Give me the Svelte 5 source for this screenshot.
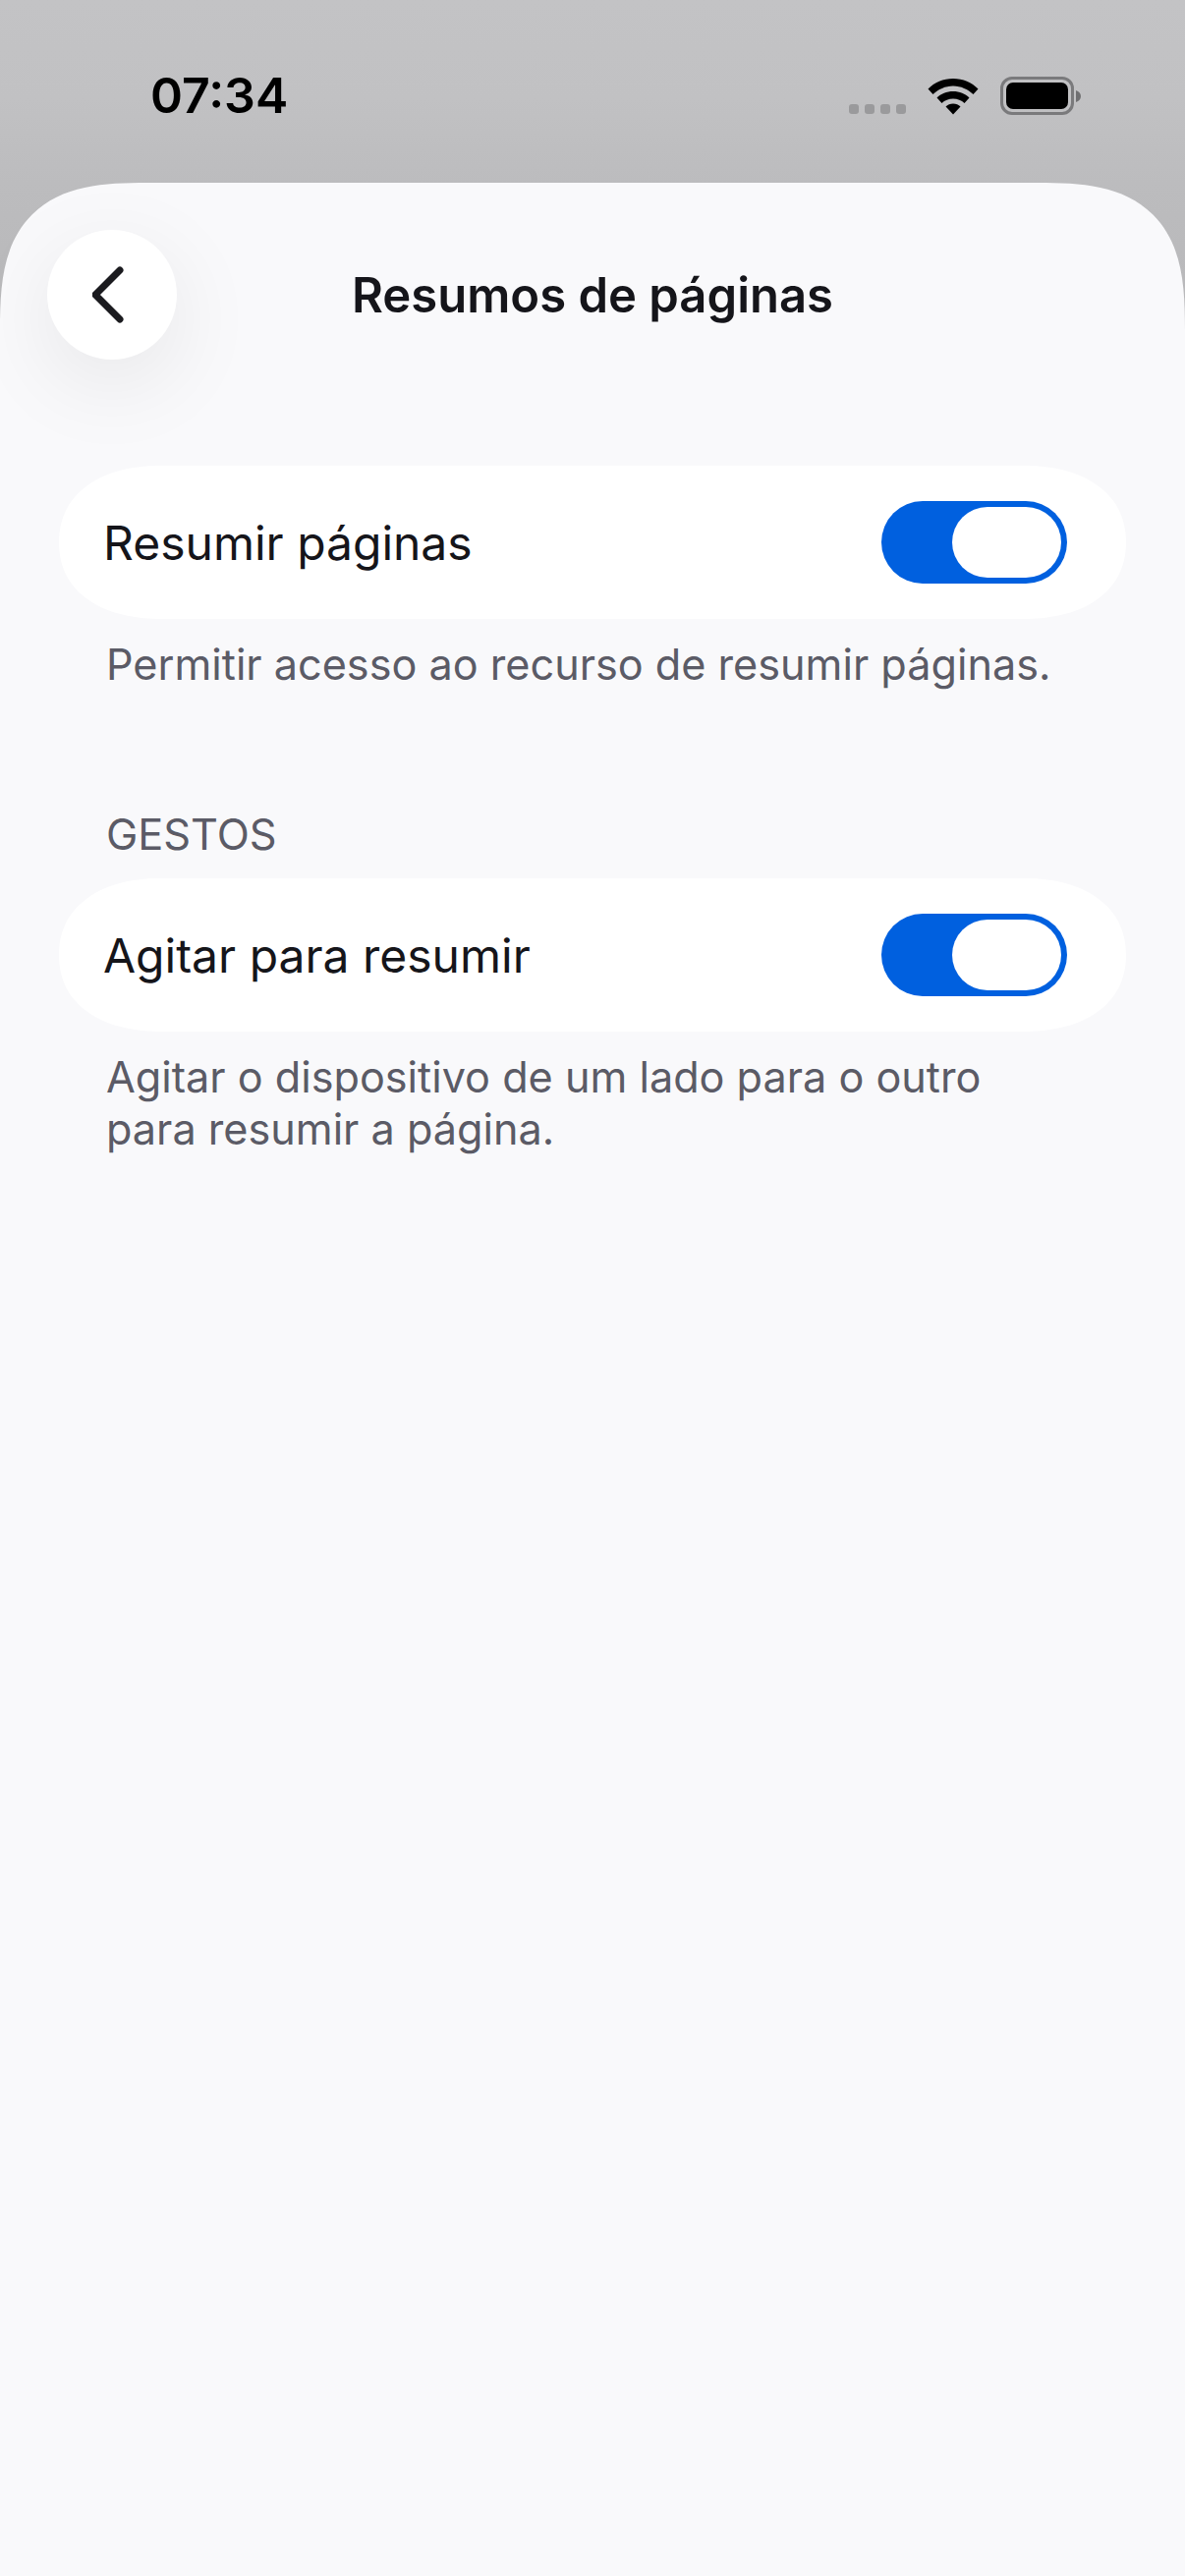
<script>
	const sections = [
		{
			label: 'Resumir páginas',
			note: 'Permitir acesso ao recurso de resumir páginas.'
		},
		{
			heading: 'GESTOS',
			label: 'Agitar para resumir',
			note: 'Agitar o dispositivo de um lado para o outro para resumir a página.'
		}
	]
</script>

<div class="screen">
	<header class="status">
		<span class="time">07:34</span>
		<div class="indicators">
			<div class="signal"><i></i><i></i><i></i><i></i></div>
			<svg class="wifi" width="52" height="38" viewBox="0 0 52 38">
				<path d="M0.500 11.500C7 5 16 1 26 1s19 4 25.500 10.500l-5 5.500C41 12 34 8.500 26 8.500S11 12 5.500 17z" />
				<path d="M9.500 20.500C13.500 16.500 19.500 14 26 14s12.500 2.500 16.500 6.500l-5 5.500C34.500 23 30.500 21.500 26 21.500S17.500 23 14.500 26z" />
				<path d="M18.500 29.500c2-2 4.500-3 7.500-3s5.500 1 7.500 3L26 37.500z" />
			</svg>
			<div class="battery"><div class="charge"></div></div>
			<svg class="nub" width="5" height="12" viewBox="0 0 5 12"><path d="M0 0c3 1 5 3 5 6s-2 5-5 6z" /></svg>
		</div>
	</header>

	<main class="sheet">
		<div class="nav">
			<button class="back" aria-label="Voltar">
				<svg width="40" height="60" viewBox="0 0 40 60">
					<path d="M28 5 3 30l25 25" />
				</svg>
			</button>
			<h1>Resumos de páginas</h1>
		</div>

		{#each sections as section}
			<section>
				{#if section.heading}
					<h2>{section.heading}</h2>
				{/if}
				<div class="card">
					<span class="label">{section.label}</span>
					<div class="toggle"><div class="knob"></div></div>
				</div>
				<p>{section.note}</p>
			</section>
		{/each}
	</main>
</div>

<style>
	:global(body) {
		margin: 0;
	}

	.screen {
		width: 1206px;
		height: 2622px;
		display: flex;
		flex-direction: column;
		background: linear-gradient(#c3c3c5, #c1c1c3 100px, #bcbcbe 186px, #b8b8ba 320px);
		font-family: Inter, "Noto Sans", sans-serif;
		overflow: hidden;
	}

	.status {
		height: 186px;
		flex: none;
		box-sizing: border-box;
		padding: 66px 0 0 153px;
		display: flex;
		justify-content: space-between;
		align-items: flex-start;
	}

	.time {
		font-size: 50px;
		line-height: 63px;
		font-weight: 600;
		color: #000;
	}

	.indicators {
		display: flex;
		align-items: center;
		margin: 12px 106px 0 0;
	}

	.signal {
		display: flex;
		gap: 6px;
		margin: 26px 22px 0 0;
	}

	.signal i {
		width: 10px;
		height: 10px;
		border-radius: 3px;
		background: #9a9a9c;
	}

	.wifi {
		fill: #000;
		margin-right: 22px;
	}

	.battery {
		width: 75px;
		height: 39px;
		box-sizing: border-box;
		border: 3px solid #7a7a7c;
		border-radius: 12px;
		padding: 3px;
	}

	.charge {
		height: 100%;
		background: #000;
		border-radius: 7px;
	}

	.nub {
		fill: #6f6f71;
		margin-left: 2px;
	}

	.sheet {
		flex: 1;
		background: #f9f9fb;
		border-radius: 150px 150px 0 0;
		corner-shape: superellipse(1.5);
		padding: 48px 60px 0;
	}

	.nav {
		height: 132px;
		display: flex;
		align-items: center;
		justify-content: center;
		position: relative;
		margin-bottom: 108px;
	}

	.back {
		position: absolute;
		left: -12px;
		top: 0;
		width: 132px;
		height: 132px;
		padding: 0;
		border: 0;
		border-radius: 50%;
		background: #fff;
		box-shadow: 0 24px 90px rgba(0, 0, 0, 0.08);
		display: flex;
		align-items: center;
		justify-content: center;
	}

	.back path {
		fill: none;
		stroke: #1b1b1f;
		stroke-width: 7;
		stroke-linecap: round;
		stroke-linejoin: round;
	}

	h1 {
		margin: 0;
		font-size: 49px;
		font-weight: 600;
		color: #15151a;
	}

	section {
		margin-bottom: 122px;
	}

	h2 {
		margin: 0 0 21px 48px;
		font-size: 43.300px;
		line-height: 48px;
		font-weight: 400;
		color: #5b5b66;
	}

	.card {
		height: 156px;
		box-sizing: border-box;
		padding: 0 60px 0 45px;
		border-radius: 104px / 78px;
		corner-shape: superellipse(1.15);
		background: #fff;
		display: flex;
		align-items: center;
		justify-content: space-between;
	}

	.label {
		font-size: 48px;
		color: #15151a;
	}

	.toggle {
		width: 189px;
		height: 84px;
		box-sizing: border-box;
		padding: 6px;
		border-radius: 42px;
		background: #0060df;
		display: flex;
		justify-content: flex-end;
	}

	.knob {
		width: 111px;
		height: 72px;
		border-radius: 36px;
		background: #fff;
	}

	p {
		margin: 20px 60px 0 48px;
		font-size: 43.200px;
		line-height: 53px;
		color: #5b5b66;
	}
</style>
